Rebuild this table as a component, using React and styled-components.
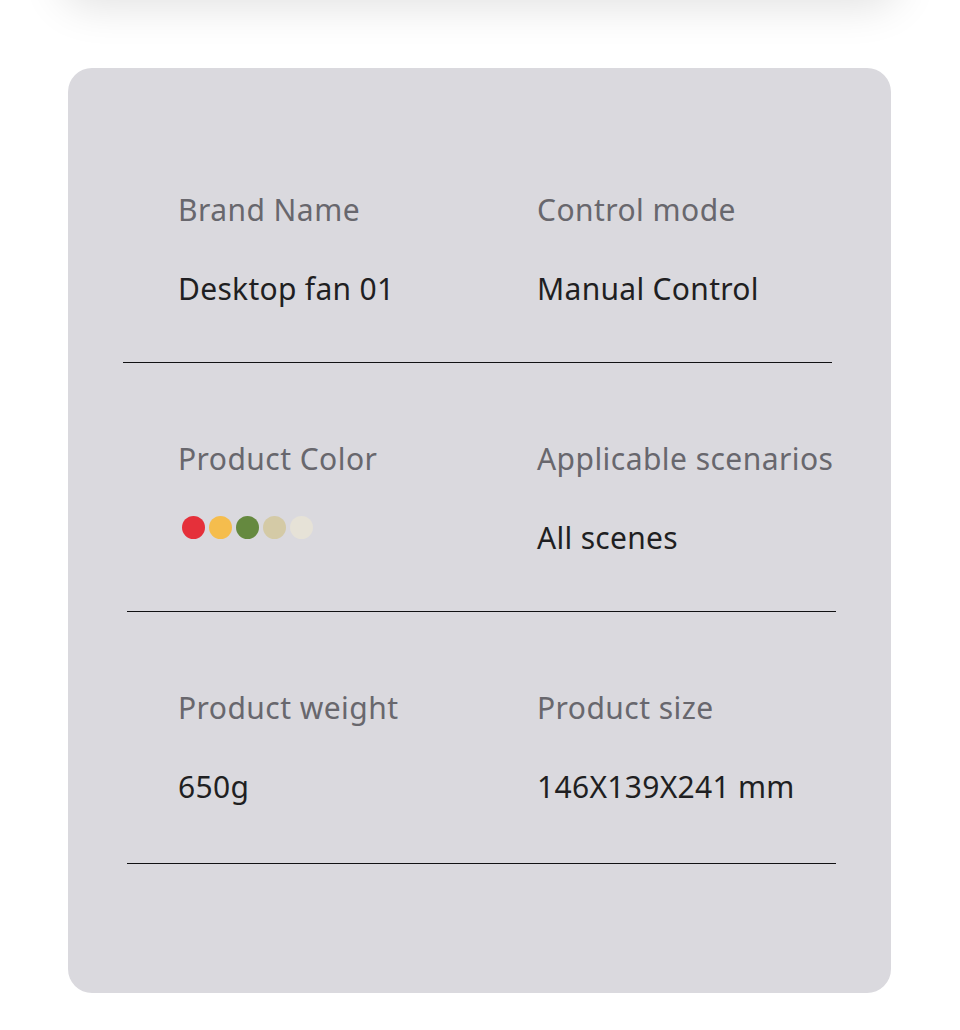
import React from 'react'
import styled, { createGlobalStyle } from 'styled-components'

const GlobalStyle = createGlobalStyle`
  html, body {
    margin: 0;
    padding: 0;
    background: #ffffff;
  }
  body {
    font-family: "Noto Sans", "Open Sans", sans-serif;
    overflow: hidden;
  }
`

const Page = styled.div`
  width: 960px;
  height: 1030px;
  overflow: hidden;
  background: #ffffff;
`

const TopShade = styled.div`
  height: 60px;
  margin: -72px 60px 0;
  border-radius: 30px;
  background: #ffffff;
  box-shadow: 0 18px 44px rgba(0, 0, 0, 0.12);
`

const Card = styled.section`
  margin: 80px 0 0 68px;
  width: 823px;
  height: 925px;
  box-sizing: border-box;
  padding-top: 122px;
  background: #dad9de;
  border-radius: 24px;
`

const Row = styled.div`
  & + & {
    margin-top: 76px;
  }
`

const Grid = styled.div`
  display: grid;
  grid-template-columns: 359px 1fr;
  padding-left: 110px;
`

const Cell = styled.div`
  display: flex;
  flex-direction: column;
  gap: 39px;
`

const Label = styled.div`
  font-size: 30px;
  line-height: 40px;
  letter-spacing: 0.45px;
  color: #68676d;
  white-space: nowrap;
`

const Value = styled.div`
  font-size: 30px;
  line-height: 40px;
  letter-spacing: 0.3px;
  color: #1f1f22;
  white-space: nowrap;
`

const Swatches = styled.div`
  height: 40px;
  display: flex;
  gap: 4px;
  padding-left: 4px;
  margin-top: -2px;
`

const Dot = styled.span`
  width: 23px;
  height: 23px;
  border-radius: 50%;
  background: ${p => p.$color};
`

const Divider = styled.div`
  height: 1px;
  width: 709px;
  margin-top: ${p => p.$gap}px;
  margin-left: ${p => p.$shift}px;
  background: #111113;
`

const colors = ['#e5303a', '#f5bd4d', '#65893f', '#d4caa6', '#e6e2d7']

const rows = [
  {
    shift: 55,
    gap: 53,
    cells: [
      { label: 'Brand Name', value: 'Desktop fan 01' },
      { label: 'Control mode', value: 'Manual Control' },
    ],
  },
  {
    shift: 59,
    gap: 53,
    cells: [
      { label: 'Product Color', swatches: colors },
      { label: 'Applicable scenarios', value: 'All scenes' },
    ],
  },
  {
    shift: 59,
    gap: 56,
    cells: [
      { label: 'Product weight', value: '650g' },
      { label: 'Product size', value: '146X139X241 mm' },
    ],
  },
]

export default function App() {
  return (
    <Page>
      <GlobalStyle />
      <TopShade />
      <Card>
        {rows.map((r, i) => (
          <Row key={`row${i}`}>
            <Grid>
              {r.cells.map((c, j) => (
                <Cell key={`cell${j}`}>
                  <Label>{c.label}</Label>
                  {c.swatches ? (
                    <Swatches>
                      {c.swatches.map(col => <Dot key={col} $color={col} />)}
                    </Swatches>
                  ) : (
                    <Value>{c.value}</Value>
                  )}
                </Cell>
              ))}
            </Grid>
            <Divider $shift={r.shift} $gap={r.gap} />
          </Row>
        ))}
      </Card>
    </Page>
  )
}
